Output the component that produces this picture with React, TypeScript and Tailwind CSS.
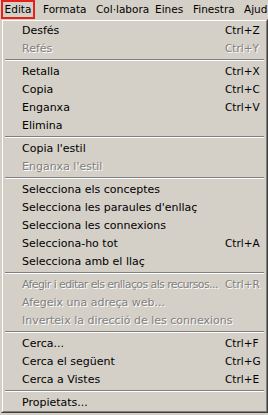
import React from "react";

type Item = { label: string; shortcut?: string; disabled?: boolean; tight?: boolean } | "sep";

const items: Item[] = [
  { label: "Desfés", shortcut: "Ctrl+Z" },
  { label: "Refés", shortcut: "Ctrl+Y", disabled: true },
  "sep",
  { label: "Retalla", shortcut: "Ctrl+X" },
  { label: "Copia", shortcut: "Ctrl+C" },
  { label: "Enganxa", shortcut: "Ctrl+V" },
  { label: "Elimina" },
  "sep",
  { label: "Copia l'estil" },
  { label: "Enganxa l'estil", disabled: true },
  "sep",
  { label: "Selecciona els conceptes" },
  { label: "Selecciona les paraules d'enllaç" },
  { label: "Selecciona les connexions" },
  { label: "Selecciona-ho tot", shortcut: "Ctrl+A" },
  { label: "Selecciona amb el llaç" },
  "sep",
  { label: "Afegir i editar els enllaços als recursos...", shortcut: "Ctrl+R", disabled: true, tight: true },
  { label: "Afegeix una adreça web...", disabled: true },
  { label: "Inverteix la direcció de les connexions", disabled: true },
  "sep",
  { label: "Cerca...", shortcut: "Ctrl+F" },
  { label: "Cerca el següent", shortcut: "Ctrl+G" },
  { label: "Cerca a Vistes", shortcut: "Ctrl+E" },
  "sep",
  { label: "Propietats..." },
];

export default function App() {
  return (
    <div
      className="w-[268px] h-[415px] bg-[#d4d0c8] overflow-hidden text-[11px] text-black leading-none"
      style={{ fontFamily: '"DejaVu Sans", Verdana, sans-serif' }}
    >
      <div className="flex h-[19px] items-stretch pl-[1px] whitespace-nowrap text-[10.5px]">
        <div className="relative flex w-[34px] shrink-0 items-center justify-center border border-t-[#808080] border-l-[#808080] border-b-white border-r-white">
          <span>Edita</span>
          <div className="absolute -left-[1px] -top-[1px] -right-[1px] -bottom-[1px] border-2 border-[#e8201c]" />
        </div>
        <div className="flex w-[53px] shrink-0 items-center pl-[8px]">Formata</div>
        <div className="flex w-[59px] shrink-0 items-center pl-[8px]">Col·labora</div>
        <div className="flex w-[38px] shrink-0 items-center pl-[8px]">Eines</div>
        <div className="flex w-[51px] shrink-0 items-center pl-[8px]">Finestra</div>
        <div className="flex shrink-0 items-center pl-[8px]">Ajuda</div>
      </div>
      <div className="ml-[1px] w-[267px] border-t border-l border-[#d4d0c8] border-r border-r-[#404040] border-b border-b-[#404040]">
        <div className="border-t border-l border-white border-r border-r-[#808080] border-b border-b-[#808080] px-[1px]">
          {items.map((it, i) =>
            it === "sep" ? (
              <div key={i} className="pt-[2px] pb-[1px] px-[1px]">
                <div className="h-[1px] bg-[#808080]" />
                <div className="h-[1px] bg-white" />
              </div>
            ) : (
              <div
                key={i}
                className={`flex h-[18px] items-center whitespace-nowrap ${it.disabled ? "text-[#808080] [text-shadow:1px_1px_0_#fff]" : ""}`}
              >
                <span className={`pl-[18px] flex-1 overflow-hidden ${it.tight ? "tracking-[-0.6px]" : ""}`}>{it.label}</span>
                {it.shortcut && <span className="w-[40px] shrink-0 text-[10.5px]">{it.shortcut}</span>}
              </div>
            )
          )}
        </div>
      </div>
    </div>
  );
}
